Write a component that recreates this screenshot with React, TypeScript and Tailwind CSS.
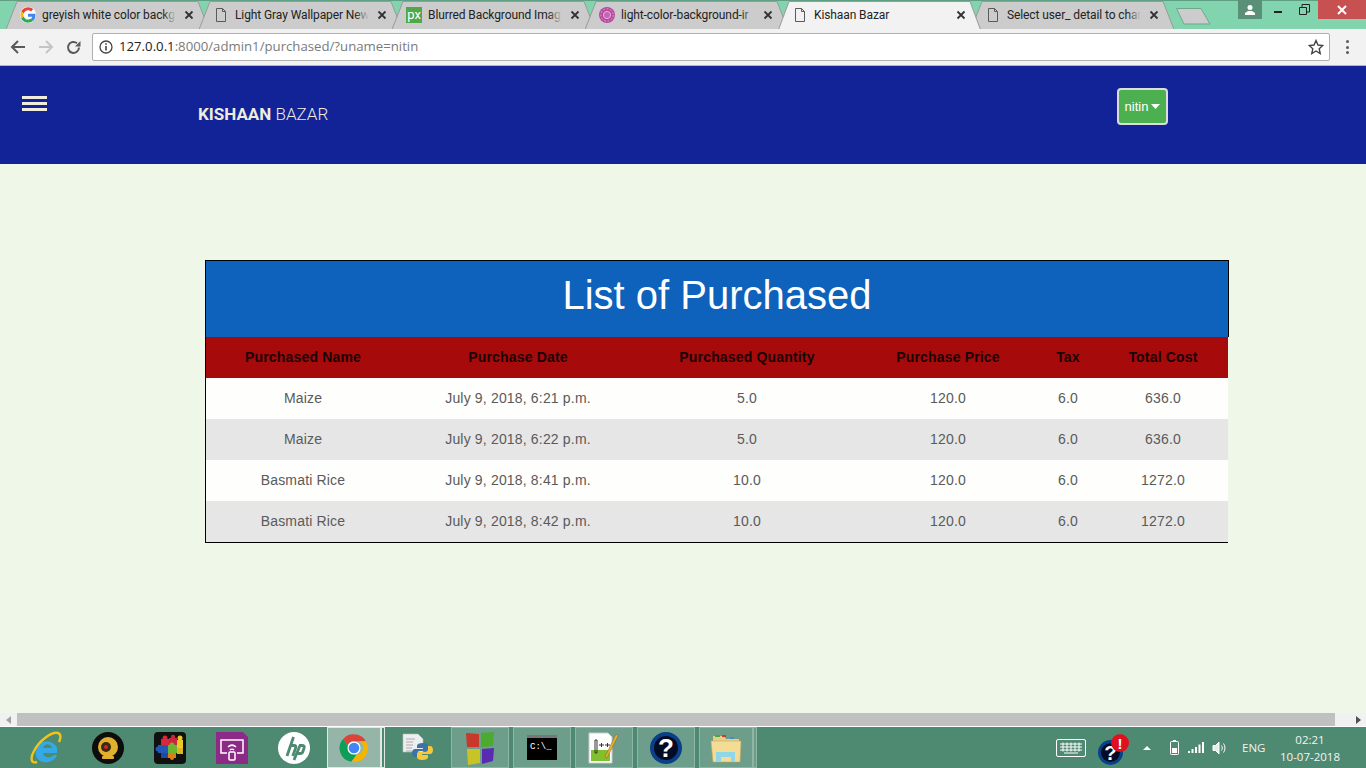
import type { ReactNode } from "react";

const rows = [
  ["Maize", "July 9, 2018, 6:21 p.m.", "5.0", "120.0", "6.0", "636.0"],
  ["Maize", "July 9, 2018, 6:22 p.m.", "5.0", "120.0", "6.0", "636.0"],
  ["Basmati Rice", "July 9, 2018, 8:41 p.m.", "10.0", "120.0", "6.0", "1272.0"],
  ["Basmati Rice", "July 9, 2018, 8:42 p.m.", "10.0", "120.0", "6.0", "1272.0"],
];

const headers = [
  { label: "Purchased Name", width: "w-[194px]" },
  { label: "Purchase Date", width: "w-[236px]" },
  { label: "Purchased Quantity", width: "w-[222px]" },
  { label: "Purchase Price", width: "w-[180px]" },
  { label: "Tax", width: "w-[60px]" },
  { label: "Total Cost", width: "w-[130px]" },
];

function PageIcon() {
  return (
    <svg width="12" height="14" viewBox="0 0 12 14" fill="none" stroke="#5a5a5a" strokeWidth="1">
      <path d="M1.500 .5h6l3 3v10h-9z M7.500 .5v3h3" />
    </svg>
  );
}

function GoogleIcon() {
  return (
    <svg width="16" height="16" viewBox="0 0 48 48" className="rounded-full bg-white">
      <path fill="#EA4335" d="M24 10c3.500 0 6.600 1.200 9 3.500l6.700-6.700C35.600 3 30.200 1 24 1 15 1 7.300 6.100 3.500 13.600l7.800 6C13.200 14 18.100 10 24 10z" />
      <path fill="#4285F4" d="M46.500 24.500c0-1.600-.1-3.100-.4-4.500H24v9h12.700c-.6 2.900-2.200 5.400-4.700 7l7.600 5.900c4.400-4.100 6.900-10.100 6.900-17.400z" />
      <path fill="#FBBC05" d="M11.300 28.400c-.5-1.400-.8-2.900-.8-4.400s.3-3 .8-4.400l-7.800-6C1.900 16.800 1 20.300 1 24s.9 7.200 2.500 10.400l7.800-6z" />
      <path fill="#34A853" d="M24 47c6.200 0 11.500-2 15.600-5.600L32 35.500c-2.100 1.400-4.800 2.300-8 2.300-5.900 0-10.800-4-12.700-9.400l-7.800 6C7.300 41.900 15 47 24 47z" />
    </svg>
  );
}

function PxIcon() {
  return (
    <div className="flex h-4 w-4 items-center justify-center bg-[#4fa84a] pb-[1px] text-[13px] leading-none text-white [font-family:Roboto,sans-serif]">
      px
    </div>
  );
}

function PurpleIcon() {
  return (
    <svg width="16" height="16" viewBox="0 0 16 16">
      <circle cx="8" cy="8" r="8" fill="#b8479f" />
      <circle cx="8" cy="8" r="6.200" fill="none" stroke="#dc9fcd" strokeWidth="1" strokeDasharray="2 1.500" />
      <circle cx="8" cy="8" r="3.600" fill="#c765b0" stroke="#e6b5da" strokeWidth="1" />
    </svg>
  );
}

function Tab({ title, icon, active }: { title: string; icon: ReactNode; active?: boolean }) {
  return (
    <div className={`relative -mr-[11px] h-[29px] w-[204px] flex-none ${active ? "z-10 h-[30px]" : ""}`}>
      <svg className="absolute inset-0" width="204" height={active ? 30 : 29} viewBox={`0 0 204 ${active ? 30 : 29}`}>
        <path
          d={active ? "M0 30L11 .5H192L203 30z" : "M0 28.500L11 .5H192L203 28.500z"}
          fill={active ? "#f2f2f2" : "#cccccc"}
          stroke="#9a9a9a"
          strokeWidth="1"
        />
      </svg>
      <div className="relative flex h-[28px] items-center pl-[14px]">
        <div className="flex w-[16px] flex-none justify-center">{icon}</div>
        <div className="relative ml-[6px] w-[134px] flex-none overflow-hidden whitespace-nowrap text-[12px] tracking-[-0.1px] text-[#222] [font-family:Roboto,sans-serif]">
          {title}
          {!active && (
            <div className="absolute inset-y-0 right-0 w-[14px] bg-gradient-to-r from-transparent to-[#cccccc]" />
          )}
        </div>
        <svg className="ml-[8px]" width="10" height="10" viewBox="0 0 10 10" stroke="#333" strokeWidth="1.800">
          <path d="M1.500 1.500l7 7M8.500 1.500l-7 7" />
        </svg>
      </div>
    </div>
  );
}

function TitleBar() {
  return (
    <div className="flex h-[29px] flex-none border-t border-t-[#5f9f83] bg-[#82d4ae]">
      <div className="ml-[6px] flex">
        <Tab title="greyish white color backg" icon={<GoogleIcon />} />
        <Tab title="Light Gray Wallpaper New" icon={<PageIcon />} />
        <Tab title="Blurred Background Imag" icon={<PxIcon />} />
        <Tab title="light-color-background-ir" icon={<PurpleIcon />} />
        <Tab title="Kishaan Bazar" icon={<PageIcon />} active />
        <Tab title="Select user_ detail to char" icon={<PageIcon />} />
      </div>
      <svg className="ml-[12px] mt-[6px]" width="36" height="18" viewBox="0 0 36 18">
        <path d="M.5 1.500H25L34 17H8z" fill="#cccccc" stroke="#6fa78d" />
      </svg>
      <div className="ml-[26px] flex h-[19px] w-[24px] -translate-y-px items-center justify-center bg-[#5a9077]">
        <svg width="10" height="10" viewBox="0 0 10 10" fill="#fff">
          <circle cx="5" cy="2.500" r="2.500" />
          <path d="M0 10V8l3-2h4l3 2v2z" />
        </svg>
      </div>
      <div className="flex w-[56px] -translate-y-px items-start">
        <div className="ml-[12px] mt-[11px] h-[2px] w-[8px] bg-[#222]" />
        <svg className="ml-[17px] mt-[4px]" width="11" height="11" viewBox="0 0 11 11" fill="none" stroke="#222">
          <path d="M.5 3.500h7v7h-7z M3 3V.5h7.500V8H8" />
        </svg>
      </div>
      <div className="flex h-[19px] w-[48px] -translate-y-px items-center justify-center bg-[#c75050]">
        <svg width="10" height="10" viewBox="0 0 10 10" stroke="#fff" strokeWidth="2">
          <path d="M1 1l8 8M9 1l-8 8" />
        </svg>
      </div>
    </div>
  );
}

function Toolbar() {
  return (
    <div className="z-20 flex h-[37px] flex-none items-center border-b border-b-[#b5b5b5] bg-[#f2f2f2]">
      <svg className="ml-[10px]" width="16" height="14" viewBox="0 0 16 14" fill="none" stroke="#5a5a5a" strokeWidth="2">
        <path d="M15 7H2M8 1L2 7l6 6" />
      </svg>
      <svg className="ml-[12px]" width="16" height="14" viewBox="0 0 16 14" fill="none" stroke="#c4c4c4" strokeWidth="2">
        <path d="M1 7h13M8 1l6 6-6 6" />
      </svg>
      <svg className="ml-[12px]" width="15" height="15" viewBox="0 0 15 15" fill="none" stroke="#5a5a5a" strokeWidth="2">
        <path d="M13 7.500A5.500 5.500 0 1 1 11 3.200" />
        <path d="M14.500 1v5.500H9z" fill="#5a5a5a" stroke="none" />
      </svg>
      <div className="ml-[11px] flex h-[28px] w-[1238px] items-center rounded-[2px] border border-[#b0b0b0] bg-white">
        <svg className="ml-[6px]" width="14" height="14" viewBox="0 0 14 14" fill="none" stroke="#444" strokeWidth="1.300">
          <circle cx="7" cy="7" r="6" />
          <path d="M7 6v4.500M7 3.300v1.500" strokeWidth="1.600" />
        </svg>
        <div className="ml-[6px] flex-1 text-[13.200px] text-[#7a7a7a]">
          <span className="text-[#222]">127.0.0.1</span>:8000/admin1/purchased/?uname=nitin
        </div>
        <svg className="mr-[5px]" width="16" height="16" viewBox="0 0 16 16" fill="none" stroke="#444" strokeWidth="1.400">
          <path d="M8 1.500l2 4.500 4.800.5-3.600 3.200 1 4.800L8 12l-4.200 2.500 1-4.800L1.200 6.500 6 6z" />
        </svg>
      </div>
      <div className="ml-[16px] flex flex-col gap-[2.500px]">
        <div className="h-[3px] w-[3px] rounded-full bg-[#5a5a5a]" />
        <div className="h-[3px] w-[3px] rounded-full bg-[#5a5a5a]" />
        <div className="h-[3px] w-[3px] rounded-full bg-[#5a5a5a]" />
      </div>
    </div>
  );
}

function NavBar() {
  return (
    <div className="flex h-[98px] flex-none bg-[#122297]">
      <div className="ml-[22px] mt-[30px] flex w-[25px] flex-none flex-col gap-[3px]">
        <div className="h-[3px] bg-[#efecdc]" />
        <div className="h-[3px] bg-[#efecdc]" />
        <div className="h-[3px] bg-[#efecdc]" />
      </div>
      <div className="ml-[151px] mt-[38px] w-[919px] flex-none text-[17px] leading-5 text-[#efecdc] [font-family:Roboto,sans-serif]">
        <span className="font-bold">KISHAAN</span> <span className="font-light">BAZAR</span>
      </div>
      <div className="mt-[22px] flex h-[37px] w-[51px] items-center justify-center gap-[3px] rounded-[4px] border-2 border-[#dddddd] bg-[#4caf50] text-[13px] text-white [font-family:'Liberation_Sans',sans-serif]">
        nitin
        <svg width="9" height="5" viewBox="0 0 9 5" fill="#fff">
          <path d="M0 0h9L4.500 5z" />
        </svg>
      </div>
    </div>
  );
}

function PurchasedTable() {
  return (
    <div className="w-[1024px] border-l border-t border-black [font-family:'Liberation_Sans',sans-serif]">
      <div className="flex h-[76px] w-[1023px] items-center justify-center border-r border-black bg-[#0e62bb] pb-[8px] text-[40px] text-white">
        List of Purchased
      </div>
      <table className="w-[1022px] table-fixed border-collapse border-b border-black text-center text-[14px] tracking-[0.17px]">
        <thead>
          <tr className="h-[41px] bg-[#a60a0a] text-[#1a0505]">
            {headers.map((h) => (
              <th key={h.label} className={`${h.width} p-0 font-bold`}>
                {h.label}
              </th>
            ))}
          </tr>
        </thead>
        <tbody>
          {rows.map((row, i) => (
            <tr key={i} className={`h-[41px] text-[#5a5a5a] ${i % 2 === 0 ? "bg-[#fefefc]" : "bg-[#e6e6e6]"}`}>
              {row.map((cell, j) => (
                <td key={j} className="p-0">
                  {cell}
                </td>
              ))}
            </tr>
          ))}
        </tbody>
      </table>
    </div>
  );
}

function Scrollbar() {
  return (
    <div className="flex h-[14px] flex-none items-center border-b border-b-white bg-[#f1f1f1]">
      <svg className="ml-[6px]" width="5" height="8" viewBox="0 0 5 8" fill="#a3a3a3">
        <path d="M5 0v8L0 4z" />
      </svg>
      <div className="ml-[6px] h-[13px] w-[1318px] bg-[#c0c0c0]" />
      <svg className="ml-[21px]" width="5" height="8" viewBox="0 0 5 8" fill="#505050">
        <path d="M0 0v8l5-4z" />
      </svg>
    </div>
  );
}

function IeIcon() {
  return (
    <svg width="32" height="34" viewBox="0 0 32 34" fill="none">
      <path d="M6 20a11 11 0 0 1 21-3v5H13c1 5 7 6 11 2h3c-3 8-13 9-18 5-3-2-4-6-3-9zm7-3h9c-1-5-8-5-9 0z" fill="#35a9e6" />
      <path d="M7 31C1 33 0 27 4 20 9 10 22 0 28 2c3 1 3 5 1 9" stroke="#f0c419" strokeWidth="2.400" />
    </svg>
  );
}

function CamIcon() {
  return (
    <svg width="32" height="32" viewBox="0 0 32 32">
      <circle cx="16" cy="16" r="16" fill="#0d0d0d" />
      <circle cx="16" cy="15" r="10" fill="#e0b02e" />
      <circle cx="14" cy="15" r="5" fill="#3a2a10" />
      <circle cx="14" cy="15" r="2" fill="#d8242b" />
      <rect x="10" y="24" width="12" height="3" rx="1" fill="#e0b02e" />
    </svg>
  );
}

function PuzzleIcon() {
  return (
    <svg width="32" height="32" viewBox="0 0 32 32">
      <rect width="32" height="32" rx="4" fill="#111" />
      <path d="M7 7h8v6H7z" fill="#d62a3c" />
      <circle cx="11" cy="6" r="2.500" fill="#d62a3c" />
      <path d="M15 6h8v7h-8z" fill="#c9263f" />
      <circle cx="19" cy="5" r="2.200" fill="#c9263f" />
      <path d="M23 8h6v8h-6z" fill="#e9c828" />
      <circle cx="26" cy="6" r="2.500" fill="#e9c828" />
      <path d="M4 13h10v8H4z" fill="#2357b8" />
      <circle cx="4" cy="17" r="2.500" fill="#2357b8" />
      <path d="M14 13h9v8h-9z" fill="#6cb52e" />
      <circle cx="18" cy="13" r="2.500" fill="#6cb52e" />
      <path d="M23 16h6v6h-6z" fill="#d9b81f" />
      <path d="M7 21h7v5H7z" fill="#1f4aa0" />
      <path d="M14 21h8v5h-8z" fill="#e07b1c" />
      <circle cx="18" cy="26" r="2" fill="#e07b1c" />
    </svg>
  );
}

function CastIcon() {
  return (
    <svg width="32" height="32" viewBox="0 0 32 32" fill="none" stroke="#fff" strokeWidth="1.500">
      <path d="M0 0h27l5 5v27H0z" fill="#8d2a88" stroke="none" />
      <path d="M11 21H5V8h22v13h-6" />
      <path d="M12 15c2.500-2.500 5.500-2.500 8 0M14 18c1-1 3-1 4 0" />
      <rect x="13" y="20" width="6" height="8" rx="1" />
    </svg>
  );
}

function HpIcon() {
  return (
    <svg width="32" height="32" viewBox="0 0 32 32" fill="none" stroke="#4e8a72" strokeWidth="2.800">
      <circle cx="16" cy="16" r="16" fill="#fff" stroke="none" />
      <path d="M15.500 5L9 24" />
      <path d="M12.500 13.500h3.700c1.500 0 2 .8 1.600 2L14.800 24" />
      <path d="M22 13.500L16 28" />
      <path d="M21 13.500h3c2 0 2.600 1 2.100 2.600l-1.300 3.600c-.4 1.200-1.200 1.800-2.600 1.800h-3" />
    </svg>
  );
}

function ChromeIcon() {
  return (
    <svg width="30" height="30" viewBox="0 0 48 48">
      <path d="M24 2a22 22 0 0 1 19 11H24a11 11 0 0 0-10.500 7.500L7 9a22 22 0 0 1 17-7z" fill="#db4437" />
      <path d="M7 9l9.500 16.500A11 11 0 0 0 28 34.500L20 46A22 22 0 0 1 7 9z" fill="#0f9d58" />
      <path d="M43 13a22 22 0 0 1-23 33l9-12a11 11 0 0 0 3-21z" fill="#f4b400" />
      <circle cx="24" cy="24" r="10.500" fill="#fff" />
      <circle cx="24" cy="24" r="8.500" fill="#4285f4" />
    </svg>
  );
}

function PythonIcon() {
  return (
    <svg width="32" height="32" viewBox="0 0 32 32">
      <path d="M1 2h15l5 5v13H1z" fill="#eeeeee" stroke="#bdbdbd" strokeWidth=".6" />
      <path d="M4 7h9M4 10h7M4 13h7M4 16h6M4 19h6" stroke="#aaa" />
      <path d="M18 8c-4 0-6 1-6 3v2h6v1h-8c-2 0-3 2-3 4s1 4 3 4h2v-3c0-2 1-3 3-3h6c1.500 0 2-1 2-2v-3c0-2-2-3-5-3z" fill="#3a73a8" transform="translate(3 3)" />
      <path d="M20 28c4 0 6-1 6-3v-2h-6v-1h8c2 0 3-2 3-4s-1-4-3-4h-2v3c0 2-1 3-3 3h-6c-1.500 0-2 1-2 2v3c0 2 2 3 5 3z" fill="#f6c93c" />
    </svg>
  );
}

function BlocksIcon() {
  return (
    <svg width="32" height="34" viewBox="0 0 32 34">
      <path d="M2 2l13 1v13H3z" fill="#c8392b" />
      <path d="M17 2l13-1-1 14-12 1z" fill="#4caa2e" />
      <path d="M3 18l13 0v14L4 34z" fill="#c8c428" />
      <path d="M18 18l12-1-1 13-11 3z" fill="#5a2bb0" />
    </svg>
  );
}

function CmdIcon() {
  return (
    <div className="h-[25px] w-[30px] border-t-[3px] border-t-[#777] bg-black pl-[3px] pt-[3px] text-[9px] leading-[12px] text-white [font-family:'Liberation_Mono',monospace]">
      C:\_
    </div>
  );
}

function NotepadIcon() {
  return (
    <svg width="32" height="32" viewBox="0 0 32 32">
      <path d="M1 1h19l4 4v26H1z" fill="#fff" stroke="#ccc" />
      <path d="M3 18h19v11H3z" fill="#7fc02c" />
      <path d="M7 8h2v13H7z" fill="none" stroke="#333" />
      <path d="M11 13h5M13.500 11v4M17 13h5M19.500 11v4" stroke="#333" />
      <path d="M28 2l-11 23 2 1L30 4z" fill="#e8b23a" stroke="#8a5a14" strokeWidth=".5" />
    </svg>
  );
}

function HelpIcon({ size }: { size: number }) {
  return (
    <svg width={size} height={size} viewBox="0 0 32 32">
      <circle cx="16" cy="16" r="16" fill="#0a3f8a" />
      <circle cx="16" cy="16" r="12" fill="#020c24" />
      <text x="16" y="25" textAnchor="middle" fontSize="26" fontWeight="700" fill="#fff" fontFamily="Liberation Sans">
        ?
      </text>
    </svg>
  );
}

function FolderIcon() {
  return (
    <svg width="32" height="32" viewBox="0 0 32 32">
      <path d="M3 4h11l2 3h13v3H3z" fill="#e6cf88" />
      <path d="M5 3h5v2H5z" fill="#45a845" />
      <path d="M12 3h4v2h-4z" fill="#cf3a2c" />
      <path d="M20 5h4v2h-4z" fill="#3b8ed0" />
      <path d="M1 9h30l-1 21H3z" fill="#f3dc96" stroke="#c9aa5a" strokeWidth=".6" />
      <path d="M6 20h19v10h-4v-5H11v5H6z" fill="#8fd6e8" />
    </svg>
  );
}

function PinnedButton({ children, width, extra }: { children: ReactNode; width: string; extra?: boolean }) {
  return (
    <div className="flex h-[41px] flex-none">
      <div className={`${width} flex items-center justify-center border border-[#8fb5a5] bg-[#6d9e8b]`}>{children}</div>
      {extra && <div className="w-[4px] border border-[#8fb5a5] bg-[#6d9e8b]" />}
    </div>
  );
}

function Taskbar() {
  return (
    <div className="flex h-[41px] flex-none items-center bg-[#4e8a72]">
      <div className="ml-[15px] flex">
        {[<IeIcon key="ie" />, <CamIcon key="cam" />, <PuzzleIcon key="puzzle" />, <CastIcon key="cast" />, <HpIcon key="hp" />].map(
          (icon, i) => (
            <div key={i} className="flex w-[62px] items-center justify-center">
              {icon}
            </div>
          ),
        )}
      </div>
      <div className="ml-[2px] flex h-[41px] flex-none">
        <div className="flex w-[54px] items-center justify-center border border-[#dfe9e4] bg-[#94b5a8]">
          <ChromeIcon />
        </div>
        <div className="w-[4px] border border-[#dfe9e4]" />
      </div>
      <div className="flex w-[66px] flex-none items-center justify-center">
        <PythonIcon />
      </div>
      <div className="flex gap-[4px]">
        <PinnedButton width="w-[58px]">
          <BlocksIcon />
        </PinnedButton>
        <PinnedButton width="w-[58px]">
          <CmdIcon />
        </PinnedButton>
        <PinnedButton width="w-[58px]">
          <NotepadIcon />
        </PinnedButton>
        <PinnedButton width="w-[58px]">
          <HelpIcon size={32} />
        </PinnedButton>
        <PinnedButton width="w-[54px]" extra>
          <FolderIcon />
        </PinnedButton>
      </div>
      <div className="ml-[299px] flex flex-none items-center">
        <svg width="30" height="18" viewBox="0 0 30 18" fill="none" stroke="#fff">
          <rect x=".5" y=".5" width="29" height="17" rx="1.500" />
          <path d="M4 5h22M4 8h22M4 11h22M7 3.500v9M11 3.500v9M15 3.500v9M19 3.500v9M23 3.500v9M8 14h14" />
        </svg>
        <div className="relative ml-[12px] h-[25px] w-[26px] translate-y-[5px]">
          <HelpIcon size={25} />
          <div className="absolute -right-[5px] -top-[6px] flex h-[18px] w-[18px] items-center justify-center rounded-full bg-[#e0101e] text-[15px] font-bold leading-none text-white [font-family:'Liberation_Sans',sans-serif]">
            !
          </div>
        </div>
        <svg className="ml-[19px]" width="8" height="4" viewBox="0 0 8 4" fill="#fff">
          <path d="M0 4l4-4 4 4z" />
        </svg>
        <svg className="ml-[19px]" width="9" height="15" viewBox="0 0 9 15" fill="none" stroke="#fff">
          <rect x=".5" y="1.500" width="8" height="13" rx="1" />
          <path d="M3 .5h3" />
          <rect x="2" y="8" width="5" height="5" fill="#fff" stroke="none" />
        </svg>
        <svg className="ml-[9px]" width="16" height="11" viewBox="0 0 16 11" fill="#fff">
          <path d="M0 9h2v2H0zM3.500 7h2v4h-2zM7 5h2v6H7zM10.500 2.500h2V11h-2zM14 0h2v11h-2z" />
        </svg>
        <svg className="ml-[8px]" width="15" height="14" viewBox="0 0 15 14" fill="none" stroke="#fff">
          <path d="M1 4.500h2.500L7 1v12L3.500 9.500H1z" fill="#e8efeb" />
          <path d="M9.500 4.500c1 1.500 1 3.500 0 5M11.500 2.500c2 3 2 6 0 9" />
        </svg>
        <div className="ml-[15px] w-[30px] text-[11.500px] text-[#f4f4f4]">ENG</div>
        <div className="ml-[3px] w-[70px] text-center text-[11.500px] leading-[17px] text-[#f4f4f4]">
          <div>02:21</div>
          <div>10-07-2018</div>
        </div>
      </div>
    </div>
  );
}

export default function App() {
  return (
    <div className="flex h-[768px] w-[1366px] flex-col overflow-hidden bg-[#eff7e9] [font-family:'Open_Sans',sans-serif]">
      <TitleBar />
      <Toolbar />
      <NavBar />
      <div className="flex-1 pl-[205px] pt-[96px]">
        <PurchasedTable />
      </div>
      <Scrollbar />
      <Taskbar />
    </div>
  );
}
